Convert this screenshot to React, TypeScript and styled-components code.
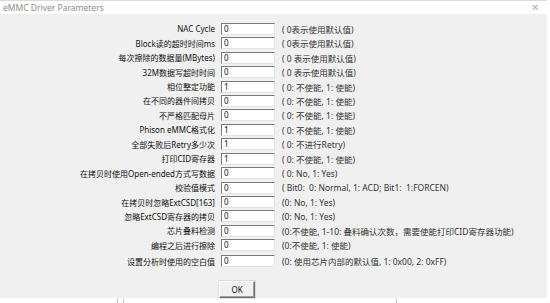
import React from 'react';
import styled, { createGlobalStyle } from 'styled-components';

const GlobalStyle = createGlobalStyle`
  html, body {
    margin: 0;
    padding: 0;
    background: #ffffff;
  }
  body {
    font-family: "Noto Sans", "Noto Sans CJK SC", sans-serif;
  }
`;

interface Param {
    label: string;
    value: string;
    hint: string;
}

const params: Param[] = [
    { label: 'NAC Cycle', value: '0', hint: '( 0表示使用默认值)' },
    { label: 'Block读的超时时间ms', value: '0', hint: '( 0表示使用默认值)' },
    { label: '每次擦除的数据量(MBytes)', value: '0', hint: '( 0 表示使用默认值)' },
    { label: '32M数据写超时时间', value: '0', hint: '( 0 表示使用默认值)' },
    { label: '相位整定功能', value: '1', hint: '( 0: 不使能, 1: 使能)' },
    { label: '在不同的器件间拷贝', value: '0', hint: '( 0: 不使能, 1: 使能)' },
    { label: '不严格匹配母片', value: '0', hint: '( 0: 不使能, 1: 使能)' },
    { label: 'Phison eMMC格式化', value: '1', hint: '( 0: 不使能, 1: 使能)' },
    { label: '全部失败后Retry多少次', value: '1', hint: '( 0: 不进行Retry)' },
    { label: '打印CID寄存器', value: '1', hint: '( 0: 不使能, 1: 使能)' },
    { label: '在拷贝时使用Open-ended方式写数据', value: '0', hint: '( 0: No, 1: Yes)' },
    { label: '校验值模式', value: '0', hint: '( Bit0:  0: Normal, 1: ACD; Bit1:  1:FORCEN)' },
    { label: '在拷贝时忽略ExtCSD[163]', value: '0', hint: '(0: No, 1: Yes)' },
    { label: '忽略ExtCSD寄存器的拷贝', value: '0', hint: '(0: No, 1: Yes)' },
    { label: '芯片叠料检测', value: '0', hint: '(0:不使能, 1-10: 叠料确认次数，需要使能打印CID寄存器功能)' },
    { label: '编程之后进行擦除', value: '0', hint: '(0:不使能, 1: 使能)' },
    { label: '设置分析时使用的空白值', value: '0', hint: '(0: 使用芯片内部的默认值, 1: 0x00, 2: 0xFF)' },
];

const Window = styled.div`
  width: 547px;
  height: 298px;
  background: #f0f0f0;
  display: flex;
  flex-direction: column;
  box-sizing: border-box;
  border-top: 1px solid #dcdcdc;
`;

const TitleBar = styled.div`
  height: 16px;
  background: #ffffff;
  display: flex;
  align-items: center;
  justify-content: space-between;
  padding: 0 8px 0 3px;
  font-size: 8.5px;
  color: #8c8c8c;
`;

const Close = styled.span`
  font-size: 10px;
  color: #b0b0b0;
  line-height: 1;
`;

const Form = styled.div`
  display: grid;
  grid-template-columns: 215px 54px 1fr;
  grid-auto-rows: 14.45px;
  column-gap: 6px;
  padding-top: 8px;
  align-items: center;
`;

const Label = styled.div<{ $shift?: number }>`
  text-align: right;
  font-size: 8px;
  color: #111;
  white-space: nowrap;
  margin-top: ${(p) => p.$shift ?? 0}px;
`;

const Field = styled.div<{ $shift?: number }>`
  height: 12px;
  box-sizing: border-box;
  background: #ffffff;
  border: 1px solid;
  border-color: #7a7a7a #e2e2e2 #e2e2e2 #7a7a7a;
  font-size: 8px;
  line-height: 10px;
  padding-left: 2px;
  color: #111;
  margin-top: ${(p) => p.$shift ?? 0}px;
`;

const Hint = styled.div<{ $shift?: number }>`
  font-size: 8.5px;
  color: #333;
  white-space: pre;
  margin-left: 1px;
  margin-top: ${(p) => p.$shift ?? 0}px;
`;

const Footer = styled.div`
  padding: 9px 0 0 219px;
`;

const OkButton = styled.button`
  width: 36px;
  height: 17px;
  padding: 0;
  background: #f0f0f0;
  border: 1px solid;
  border-color: #ffffff #6e6e6e #6e6e6e #ffffff;
  box-shadow: inset -1px -1px 0 #a0a0a0, 0 0 0 0.5px #c8c8c8;
  font-family: "Noto Sans", sans-serif;
  font-size: 8px;
  color: #111;
`;

const Under = styled.div`
  height: 5px;
  display: flex;
`;

const UnderPane = styled.div`
  margin-left: 117px;
  width: 280px;
  box-sizing: border-box;
  border-left: 1px solid #c8c8c8;
  border-right: 1px solid #c8c8c8;
  padding-left: 5px;
`;

const UnderInner = styled.div`
  height: 100%;
  border-left: 1px solid #d0d0d0;
`;

export default function App() {
    return (
        <>
            <GlobalStyle />
            <Window>
                <TitleBar>
                    <span>eMMC Driver Parameters</span>
                    <Close>✕</Close>
                </TitleBar>
                <Form>
                    {params.map((p, i) => {
                        // the last row sits a little lower than the rest
                        const shift = i === params.length - 1 ? 3 : 0;
                        return (
                            <React.Fragment key={i}>
                                <Label $shift={shift}>{p.label}</Label>
                                <Field $shift={shift}>{p.value}</Field>
                                <Hint $shift={shift}>{p.hint}</Hint>
                            </React.Fragment>
                        );
                    })}
                </Form>
                <Footer>
                    <OkButton>OK</OkButton>
                </Footer>
            </Window>
            <Under>
                <UnderPane>
                    <UnderInner />
                </UnderPane>
            </Under>
        </>
    );
}
